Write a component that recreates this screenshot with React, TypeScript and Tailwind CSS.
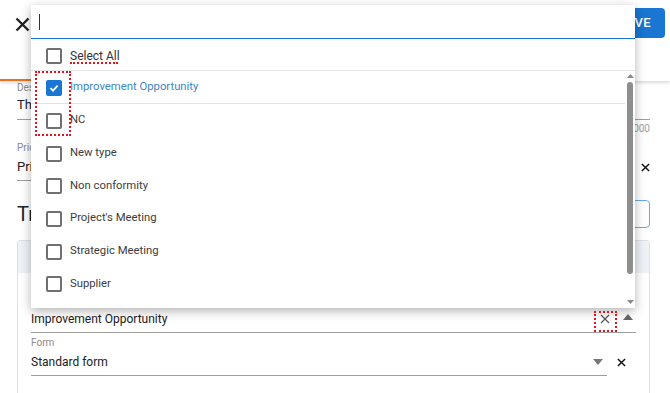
import React from "react";

const items = [
  { label: "Improvement Opportunity", checked: true },
  { label: "NC", checked: false },
  { label: "New type", checked: false },
  { label: "Non conformity", checked: false },
  { label: "Project's Meeting", checked: false },
  { label: "Strategic Meeting", checked: false },
  { label: "Supplier", checked: false },
  { label: "Training", checked: false },
];

function XIcon({ size, stroke, color }: { size: number; stroke: number; color: string }) {
  return (
    <svg width={size} height={size} viewBox="0 0 10 10">
      <path d="M1 1L9 9M9 1L1 9" stroke={color} strokeWidth={stroke} fill="none" />
    </svg>
  );
}

function Checkbox({ checked }: { checked: boolean }) {
  if (checked) {
    return (
      <div className="w-4 h-4 rounded-[2px] bg-[#1976d2] flex items-center justify-center shrink-0">
        <svg width="12" height="12" viewBox="0 0 12 12">
          <path d="M2.5 6.2L5 8.6L9.6 3.6" stroke="#fff" strokeWidth="1.8" fill="none" />
        </svg>
      </div>
    );
  }
  return <div className="w-4 h-4 rounded-[2px] border-2 border-[#707070] shrink-0" />;
}

export default function App() {
  return (
    <div className="relative w-[670px] h-[393px] overflow-hidden bg-white font-['Roboto',sans-serif] text-[#212121]">
      {/* Header */}
      <div className="h-[81px] shadow-[0_2px_3px_rgba(0,0,0,0.14)] relative z-0">
        <div className="h-[48px] flex items-center justify-between pl-[15px] pr-[5px]">
          <XIcon size={15} stroke={1.6} color="#222" />
          <div className="h-[30px] mt-[-2px] px-[14px] rounded-[4px] bg-[#1976d2] text-white text-[13px] font-medium flex items-center tracking-wide">
            SAVE
          </div>
        </div>
        <div className="h-[33px] flex items-end">
          <div className="w-[180px] border-b-2 border-[#e8731f]" />
        </div>
      </div>

      {/* Content */}
      <div className="pl-[17px] pr-[20px]">
        {/* Description */}
        <div className="text-[10px] leading-[12px] text-[#8a8a8a] mt-[1px]">Description</div>
        <div className="h-[26px] leading-[22px] text-[13px] border-b border-[#9e9e9e] whitespace-nowrap overflow-hidden">
          The description of the event
        </div>
        <div className="h-[18px] leading-[18px] text-[10px] text-[#9e9e9e] text-right">0/1000</div>

        {/* Priority */}
        <div className="flex items-end mt-[4px]">
          <div className="flex-1">
            <div className="text-[10px] leading-[12px] text-[#8a8a8a]">Priority</div>
            <div className="h-[27px] leading-[26px] text-[13px] border-b border-[#9e9e9e]">Priority 1</div>
          </div>
          <div className="w-[19px] h-[27px] flex items-center justify-end">
            <XIcon size={9} stroke={1.6} color="#111" />
          </div>
        </div>

        {/* Heading */}
        <div className="mt-[19px] h-[28px] flex items-center justify-between">
          <div className="text-[20px] leading-[28px]">Triggers</div>
          <div className="h-[28px] w-[110px] rounded-[4px] border border-[#6aa9e0] text-[#1976d2] text-[13px] flex items-center justify-center">
            ADD
          </div>
        </div>

        {/* Card */}
        <div className="mt-[12px] border border-[#dde1e6] rounded-t-[3px] h-[200px]">
          <div className="h-[32px] bg-[#eef2f6]" />
          <div className="px-[13px]">
            <div className="pt-[21px] text-[10px] leading-[12px] text-[#8a8a8a]">Type</div>
            <div className="h-[27px] flex items-center border-b border-[#9e9e9e]">
              <div className="flex-1 text-[12px] leading-[26px]">Improvement Opportunity</div>
              <div className="w-[20px] flex justify-center mr-[8px]">
                <XIcon size={10} stroke={1.2} color="#555" />
              </div>
              <svg width="10" height="6" viewBox="0 0 10 6" className="mr-[3px] mb-[5px]">
                <path d="M0 6L5 0L10 6Z" fill="#666" />
              </svg>
            </div>
            <div className="flex items-end mt-[4px]">
              <div className="flex-1">
                <div className="text-[10px] leading-[12px] text-[#8a8a8a]">Form</div>
                <div className="h-[27px] flex items-center border-b border-[#9e9e9e]">
                  <div className="flex-1 text-[12px] leading-[26px]">Standard form</div>
                  <svg width="10" height="6" viewBox="0 0 10 6" className="mr-[4px]">
                    <path d="M0 0L10 0L5 6Z" fill="#777" />
                  </svg>
                </div>
              </div>
              <div className="w-[29px] h-[27px] flex items-center justify-center">
                <XIcon size={9} stroke={1.6} color="#111" />
              </div>
            </div>
          </div>
        </div>
      </div>

      {/* Dropdown overlay */}
      <div className="absolute left-[31px] top-[5px] w-[604px] h-[303px] bg-white shadow-[0_3px_10px_rgba(0,0,0,0.3)] flex flex-col overflow-hidden">
        <div className="h-[34px] shrink-0 border-b-[1.5px] border-[#1976d2] flex items-center pl-[8px]">
          <div className="w-px h-[16px] bg-[#333]" />
        </div>
        <div className="h-[32px] shrink-0 border-b border-[#e3e3e3] flex items-center pl-[15px] pt-[2px] gap-[8px]">
          <Checkbox checked={false} />
          <span className="text-[12px] text-[#333]">Select All</span>
        </div>
        <div className="flex-1 flex min-h-0">
          <div className="flex-1 overflow-hidden">
            {items.map((it, i) => (
              <div
                key={it.label}
                className={
                  "h-[32.65px] flex items-center pl-[15px] pt-[2px] gap-[8px] " +
                  (i === 0 ? "border-b border-[#e3e3e3]" : "")
                }
              >
                <Checkbox checked={it.checked} />
                <span className={"text-[11.3px] " + (it.checked ? "text-[#3a86c8]" : "text-[#3c3c3c]")}>
                  {it.label}
                </span>
              </div>
            ))}
          </div>
          <div className="w-[10px] flex flex-col items-center pt-[3px] pb-[4px]">
            <svg width="7" height="4" viewBox="0 0 7 4">
              <path d="M0 4L3.5 0L7 4Z" fill="#8a8a8a" />
            </svg>
            <div className="mt-[4px] w-[6px] h-[192px] rounded-full bg-[#8e8e8e]" />
            <div className="flex-1" />
            <svg width="7" height="4" viewBox="0 0 7 4">
              <path d="M0 0L7 0L3.5 4Z" fill="#8a8a8a" />
            </svg>
          </div>
        </div>
      </div>

      {/* Annotations */}
      <div className="absolute left-[35px] top-[71px] w-[36px] h-[65px] border-2 border-dotted border-[#e5141c]" />
      <div className="absolute left-[70px] top-[62px] w-[48px] border-t-2 border-dotted border-[#e5141c]" />
      <div className="absolute left-[594px] top-[311px] w-[23px] h-[21px] border-2 border-dotted border-[#e5141c]" />
    </div>
  );
}
